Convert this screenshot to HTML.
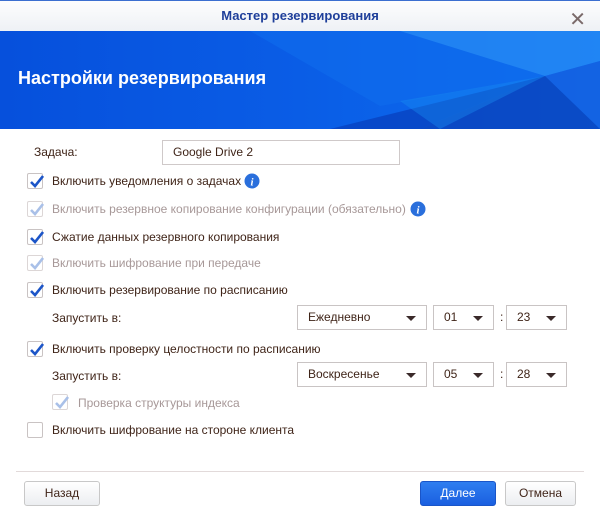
<!DOCTYPE html>
<html><head><meta charset="utf-8"><style>
*{box-sizing:border-box;margin:0;padding:0}
body{width:600px;height:511px;overflow:hidden;background:#fff;font-family:"Liberation Sans","DejaVu Sans",sans-serif;font-size:12px;color:#3f2418;position:relative}
.abs{position:absolute}
.title{left:0;top:0;width:600px;height:31px;background:linear-gradient(#fdfdfe,#eef1f5);border-top:1px solid #3c6fd0;text-align:center;line-height:30px;font-weight:bold;font-size:13px;color:#1f3f9a}
.x{right:14px;top:4px;font-size:20px;color:#7a6a6a;font-weight:normal}
.banner{left:0;top:31px;width:600px;height:98px;overflow:hidden;background:#0a58e0}
.banner h1{position:absolute;left:18px;top:37px;color:#fff;font-size:18px;font-weight:bold}
.cb{position:absolute;width:16px;height:16px;border:1px solid #c9c3c3;background:#fff;border-radius:2px}
.cb svg{position:absolute;left:0;top:0}
.lbl{position:absolute;font-size:12px}
.dis{color:#a79898}
.sel{position:absolute;height:25px;border:1px solid #c9c4c4;background:#fff;line-height:23px;padding-left:10px;font-size:12px}
.sel:after{content:"";position:absolute;right:10px;top:10px;border-left:5px solid transparent;border-right:5px solid transparent;border-top:5px solid #3a2a2a}
.sel.noarr:after{display:none}
.btn{position:absolute;height:25px;border:1px solid #c8c8c8;border-radius:3px;background:linear-gradient(#fff,#eceef1);text-align:center;line-height:23px;font-size:12px}
</style></head><body>
<div class="abs title">Мастер резервирования<span class="abs x">✕</span></div>
<div class="abs banner">
<svg width="600" height="98" style="position:absolute;left:0;top:0">
<defs><linearGradient id="g" x1="0" x2="1"><stop offset="0" stop-color="#0650dc"/><stop offset=".5" stop-color="#0a5de6"/><stop offset="1" stop-color="#0d6ef0"/></linearGradient></defs>
<rect width="600" height="98" fill="url(#g)"/>
<polygon points="250,0 400,0 545,45 380,75" fill="#0f6ded" opacity=".6"/>
<polygon points="400,0 600,0 600,30 545,45" fill="#2a8ef5" opacity=".7"/>
<polygon points="545,45 600,30 600,98" fill="#1560e0" opacity=".8"/>
<polygon points="330,98 545,45 420,98" fill="#0842c0" opacity=".8"/>
<polygon points="420,98 545,45 600,98" fill="#0a3db5" opacity=".7"/>
<polygon points="400,70 545,45 440,98" fill="#1a8ef2" opacity=".4"/>
</svg>
<h1>Настройки резервирования</h1></div>

<div class="lbl" style="left:34px;top:145px">Задача:</div>
<div class="sel noarr" style="left:162px;top:140px;width:238px;border-color:#cfc9c9">Google Drive 2</div>

<div class="cb" style="left:27px;top:173px"><svg width="16" height="16"><path d="M3 8l4 4 8-10" stroke="#1c55c8" stroke-width="2.6" fill="none"/></svg></div>
<div class="lbl" style="left:52px;top:174px">Включить уведомления о задачах</div>
<svg class="abs" style="left:244px;top:173px" width="16" height="16"><circle cx="8" cy="8" r="7.5" fill="#2a6fdc"/><text x="8" y="12.5" font-size="11" font-weight="bold" font-style="italic" fill="#fff" text-anchor="middle" font-family="Liberation Serif">i</text></svg>

<div class="cb" style="left:27px;top:201px;border-color:#dcd6d6"><svg width="16" height="16"><path d="M3 8l4 4 8-10" stroke="#a9c0e8" stroke-width="2.6" fill="none"/></svg></div>
<div class="lbl dis" style="left:52px;top:202px">Включить резервное копирование конфигурации (обязательно)</div>
<svg class="abs" style="left:410px;top:201px" width="16" height="16"><circle cx="8" cy="8" r="7.5" fill="#2a6fdc"/><text x="8" y="12.5" font-size="11" font-weight="bold" font-style="italic" fill="#fff" text-anchor="middle" font-family="Liberation Serif">i</text></svg>

<div class="cb" style="left:27px;top:229px"><svg width="16" height="16"><path d="M3 8l4 4 8-10" stroke="#1c55c8" stroke-width="2.6" fill="none"/></svg></div>
<div class="lbl" style="left:52px;top:230px">Сжатие данных резервного копирования</div>

<div class="cb" style="left:27px;top:255px;border-color:#dcd6d6"><svg width="16" height="16"><path d="M3 8l4 4 8-10" stroke="#a9c0e8" stroke-width="2.6" fill="none"/></svg></div>
<div class="lbl dis" style="left:52px;top:256px">Включить шифрование при передаче</div>

<div class="cb" style="left:27px;top:282px"><svg width="16" height="16"><path d="M3 8l4 4 8-10" stroke="#1c55c8" stroke-width="2.6" fill="none"/></svg></div>
<div class="lbl" style="left:52px;top:283px">Включить резервирование по расписанию</div>

<div class="lbl" style="left:52px;top:311px">Запустить в:</div>
<div class="sel" style="left:297px;top:305px;width:130px">Ежедневно</div>
<div class="sel" style="left:433px;top:305px;width:61px">01</div>
<div class="lbl" style="left:500px;top:310px">:</div>
<div class="sel" style="left:506px;top:305px;width:61px">23</div>

<div class="cb" style="left:27px;top:341px"><svg width="16" height="16"><path d="M3 8l4 4 8-10" stroke="#1c55c8" stroke-width="2.6" fill="none"/></svg></div>
<div class="lbl" style="left:52px;top:342px">Включить проверку целостности по расписанию</div>

<div class="lbl" style="left:52px;top:369px">Запустить в:</div>
<div class="sel" style="left:297px;top:362px;width:130px">Воскресенье</div>
<div class="sel" style="left:433px;top:362px;width:61px">05</div>
<div class="lbl" style="left:500px;top:367px">:</div>
<div class="sel" style="left:506px;top:362px;width:61px">28</div>

<div class="cb" style="left:52px;top:394px;border-color:#dcd6d6"><svg width="16" height="16"><path d="M3 8l4 4 8-10" stroke="#a9c0e8" stroke-width="2.6" fill="none"/></svg></div>
<div class="lbl dis" style="left:78px;top:396px">Проверка структуры индекса</div>

<div class="cb" style="left:27px;top:422px"></div>
<div class="lbl" style="left:52px;top:423px">Включить шифрование на стороне клиента</div>

<div class="abs" style="left:16px;top:471px;width:568px;height:1px;background:#e2dada"></div>
<div class="btn" style="left:24px;top:481px;width:76px">Назад</div>
<div class="btn" style="left:420px;top:481px;width:76px;background:linear-gradient(#2f7ef0,#1a5fe0);border-color:#1a55c8;color:#fff">Далее</div>
<div class="btn" style="left:505px;top:481px;width:71px">Отмена</div>
</body></html>
